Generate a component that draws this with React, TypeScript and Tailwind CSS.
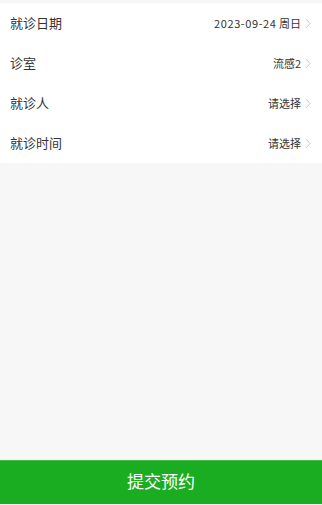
import React from "react";

const rows = [
  { label: "就诊日期", value: "2023-09-24", extra: " 周日" },
  { label: "诊室", value: "流感2" },
  { label: "就诊人", value: "请选择" },
  { label: "就诊时间", value: "请选择" },
];

function Chevron() {
  return (
    <svg width="6" height="11" viewBox="0 0 6 11" className="ml-[4px] shrink-0">
      <path d="M1 1 L5 5.5 L1 10" fill="none" stroke="#c8c8c8" strokeWidth="1" />
    </svg>
  );
}

export default function App() {
  return (
    <div
      className="h-[505px] w-[322px] bg-[#f7f7f7] flex flex-col"
      style={{ fontFamily: '"Noto Sans CJK SC", sans-serif' }}
    >
      <div className="mt-[3px] bg-white">
        {rows.map((r) => (
          <div key={r.label} className="h-[40px] flex items-center justify-between pl-[10px] pr-[11px]">
            <span className="text-[13px] text-[#333]">{r.label}</span>
            <span className="flex items-center text-[11px] text-[#333]">
              {r.extra ? (
                <span className="whitespace-pre">
                  <span className="tracking-[0.6px]">{r.value}</span>
                  {r.extra}
                </span>
              ) : (
                r.value
              )}
              <Chevron />
            </span>
          </div>
        ))}
      </div>
      <div className="flex-1" />
      <button className="h-[44px] w-full bg-[#1aad21] border-t border-[#45bd4a] text-white text-[17px] flex items-center justify-center pb-[3px] mb-[1px]">
        提交预约
      </button>
    </div>
  );
}
